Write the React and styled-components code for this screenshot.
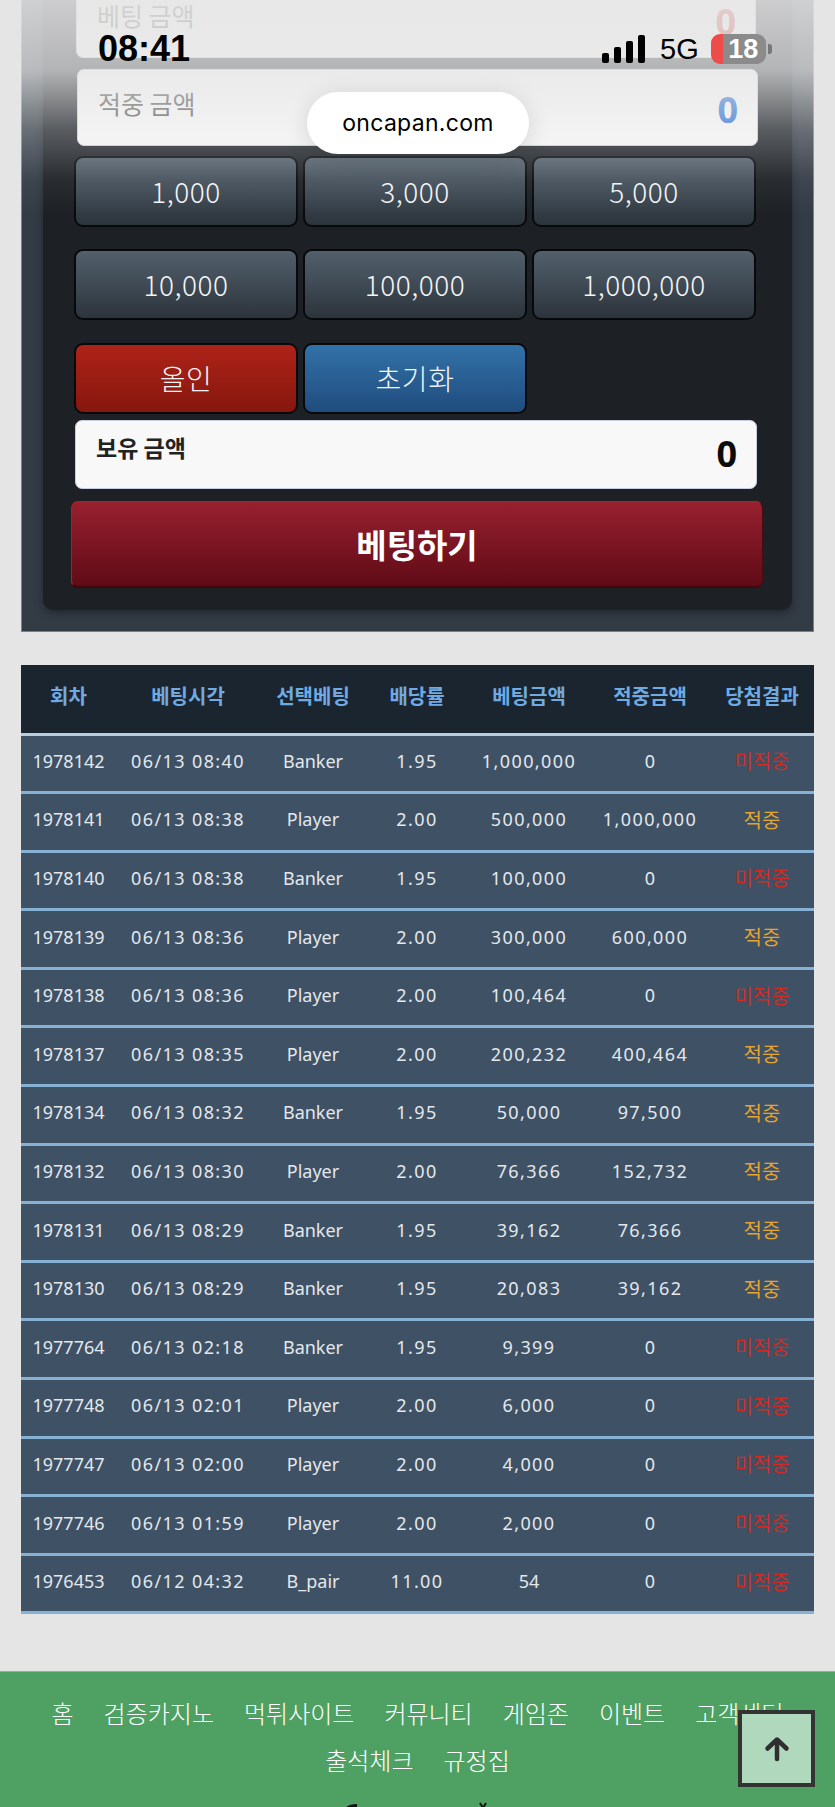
import React from 'react';
import styled, { createGlobalStyle } from 'styled-components';

const GlobalStyle = createGlobalStyle`
  html, body {
    margin: 0;
    padding: 0;
    background: #e5e5e5;
  }
  * {
    box-sizing: border-box;
  }
`;

const KR = `"Noto Sans CJK KR", sans-serif`;
const LATIN = `"Noto Sans", "Noto Sans CJK KR", sans-serif`;

const Screen = styled.div`
  position: relative;
  width: 835px;
  height: 1807px;
  overflow: hidden;
  background: #e5e5e5;
  font-family: ${LATIN};
`;

const Page = styled.div`
  margin-top: -40px;
`;

const BetPanel = styled.section`
  margin: 0 21px;
  padding: 0 21px 21px;
  background: #333b45;
  border: 1px solid #75838f;
  border-top: 0;
`;

const BetCard = styled.div`
  display: flex;
  flex-direction: column;
  padding: 21px 29px 22px 28px;
  background: #1d2126;
  border-radius: 0 0 10px 10px;
  box-shadow: 0 3px 8px rgba(0, 0, 0, 0.35);
`;

const AmountBox = styled.div`
  display: flex;
  justify-content: space-between;
  height: ${(p) => p.$height}px;
  margin: ${(p) => p.$margin};
  padding: ${(p) => p.$top}px 19px 0 20px;
  background: #f8f8f8;
  border: 1px solid #c9cde0;
  border-radius: 7px;
`;

const AmountLabel = styled.span`
  font-family: ${KR};
  font-size: ${(p) => (p.$bold ? 23 : 25)}px;
  font-weight: ${(p) => (p.$bold ? 700 : 400)};
  line-height: 34px;
  color: ${(p) => (p.$bold ? '#222' : '#555')};
`;

const AmountValue = styled.span`
  font-family: ${LATIN};
  font-size: 36px;
  font-weight: 700;
  line-height: 48px;
  color: ${(p) => p.$color};
`;

const ChipGrid = styled.div`
  display: grid;
  grid-template-columns: repeat(3, 224px);
  gap: 5px;
  margin: ${(p) => p.$margin};
  margin-left: 3px;
`;

const chipColors = {
  dark: ['#52606c', '#2c343c'],
  red: ['#ae2318', '#86170e'],
  blue: ['#3272a8', '#204c7e'],
};

const Chip = styled.button`
  height: ${(p) => p.$height || 71}px;
  padding: 0 0 2px;
  font-family: ${KR};
  font-size: 28px;
  font-weight: 300;
  letter-spacing: 0.5px;
  color: #f4f5f6;
  background: linear-gradient(${(p) => chipColors[p.$tone][0]}, ${(p) => chipColors[p.$tone][1]});
  border: 2px solid #07090b;
  border-radius: 9px;
`;

const BetButton = styled.button`
  height: 87px;
  margin-top: 12px;
  padding: 0;
  font-family: ${KR};
  font-size: 33px;
  font-weight: 700;
  color: #fff;
  background: linear-gradient(#98202f, #5f0b16);
  border: 0;
  border-top: 1px solid #ac2420;
  border-left: 1px solid #a82320;
  border-right: 1px solid #4d0a10;
  border-bottom: 2px solid #42060c;
  border-radius: 7px;
`;

const HistoryTable = styled.table`
  width: 793px;
  margin: 33px 21px 0;
  table-layout: fixed;
  border-collapse: collapse;
  text-align: center;
`;

const HeadCell = styled.th`
  height: 69px;
  padding: 0 0 7px;
  font-family: ${KR};
  font-size: 20px;
  font-weight: 700;
  color: #6fabe2;
  background: #1b2530;
  border-bottom: 3px solid #b8cddd;
`;

const Cell = styled.td`
  height: 58.6px;
  padding: 0 0 5px;
  font-family: ${LATIN};
  font-size: ${(p) => (p.$color ? 20 : 18)}px;
  font-weight: 400;
  letter-spacing: ${(p) => (p.$spaced ? 1.4 : 0)}px;
  color: ${(p) => p.$color || '#e4e8ec'};
  background: #3e5165;
  border-bottom: 3px solid #86b1d2;
`;

const Footer = styled.footer`
  margin-top: 57px;
  height: 300px;
  padding: 17px 21px 0;
  background: #4fa163;
  border-top: 1px solid #84bb92;
`;

const FooterNav = styled.nav`
  display: flex;
  flex-wrap: wrap;
  justify-content: center;
  column-gap: 30px;
  line-height: 47px;
`;

const FooterLink = styled.a`
  font-family: ${KR};
  font-size: 24px;
  font-weight: 300;
  color: #fff;
`;

const FooterMark = styled.svg`
  display: block;
  margin: 19px auto 0;
`;

const TopFade = styled.div`
  position: absolute;
  top: 0;
  left: 0;
  right: 0;
  height: 215px;
  pointer-events: none;
  background: linear-gradient(
    rgba(229, 229, 229, 0.88) 0,
    rgba(229, 229, 229, 0.75) 70px,
    rgba(229, 229, 229, 0.3) 130px,
    rgba(229, 229, 229, 0.06) 180px,
    rgba(229, 229, 229, 0) 215px
  );
`;

const StatusTime = styled.div`
  position: absolute;
  top: 28px;
  left: 98px;
  font-family: "Liberation Sans", sans-serif;
  font-size: 36px;
  font-weight: 700;
  line-height: 42px;
  color: #000;
`;

const StatusIcons = styled.div`
  position: absolute;
  top: 34px;
  left: 602px;
  display: flex;
  align-items: center;
  height: 30px;
`;

const NetworkLabel = styled.span`
  margin: 0 12px 0 15px;
  font-family: "Liberation Sans", sans-serif;
  font-size: 29px;
  color: #000;
`;

const Battery = styled.div`
  position: relative;
  display: flex;
  align-items: center;
  justify-content: center;
  width: 55px;
  height: 30px;
  padding-left: 10px;
  font-family: "Liberation Sans", sans-serif;
  font-size: 27px;
  font-weight: 700;
  color: #fff;
  border-radius: 9px;
  background: linear-gradient(90deg, #ee4b4b 12px, #8b8b8b 12px);

  &::after {
    content: '';
    position: absolute;
    top: 10px;
    right: -6px;
    width: 4px;
    height: 10px;
    border-radius: 0 3px 3px 0;
    background: #777;
  }
`;

const UrlPill = styled.div`
  position: absolute;
  top: 92px;
  left: 307px;
  display: flex;
  align-items: center;
  justify-content: center;
  width: 222px;
  height: 62px;
  font-family: "Inter", sans-serif;
  font-size: 23px;
  letter-spacing: 0.3px;
  color: #000;
  background: #fff;
  border-radius: 31px;
  box-shadow: 0 4px 24px rgba(0, 0, 0, 0.12);
`;

const ScrollTop = styled.button`
  position: absolute;
  top: 1710px;
  left: 738px;
  display: flex;
  align-items: center;
  justify-content: center;
  width: 77px;
  height: 77px;
  padding: 0;
  background: #b0d8bc;
  border: 4px solid #333;
`;

const SignalBars = () => (
  <svg width="43" height="28" viewBox="0 0 43 28">
    <rect x="0" y="18" width="7" height="10" rx="2" fill="#000" />
    <rect x="12" y="12" width="7" height="16" rx="2" fill="#000" />
    <rect x="24" y="6" width="7" height="22" rx="2" fill="#000" />
    <rect x="36" y="0" width="7" height="28" rx="2" fill="#000" />
  </svg>
);

const ArrowUp = () => (
  <svg width="26" height="26" viewBox="0 0 26 26">
    <path d="M13 23V4M3.5 12.5L13 3.5l9.5 9" fill="none" stroke="#2f2f2f" strokeWidth="4.5" strokeLinecap="round" strokeLinejoin="round" />
  </svg>
);

const columns = [95, 144, 106, 102, 122, 120, 104];
const heads = ['회차', '베팅시각', '선택베팅', '배당률', '베팅금액', '적중금액', '당첨결과'];

const rows = [
  ['1978142', '06/13 08:40', 'Banker', '1.95', '1,000,000', '0', '미적중'],
  ['1978141', '06/13 08:38', 'Player', '2.00', '500,000', '1,000,000', '적중'],
  ['1978140', '06/13 08:38', 'Banker', '1.95', '100,000', '0', '미적중'],
  ['1978139', '06/13 08:36', 'Player', '2.00', '300,000', '600,000', '적중'],
  ['1978138', '06/13 08:36', 'Player', '2.00', '100,464', '0', '미적중'],
  ['1978137', '06/13 08:35', 'Player', '2.00', '200,232', '400,464', '적중'],
  ['1978134', '06/13 08:32', 'Banker', '1.95', '50,000', '97,500', '적중'],
  ['1978132', '06/13 08:30', 'Player', '2.00', '76,366', '152,732', '적중'],
  ['1978131', '06/13 08:29', 'Banker', '1.95', '39,162', '76,366', '적중'],
  ['1978130', '06/13 08:29', 'Banker', '1.95', '20,083', '39,162', '적중'],
  ['1977764', '06/13 02:18', 'Banker', '1.95', '9,399', '0', '미적중'],
  ['1977748', '06/13 02:01', 'Player', '2.00', '6,000', '0', '미적중'],
  ['1977747', '06/13 02:00', 'Player', '2.00', '4,000', '0', '미적중'],
  ['1977746', '06/13 01:59', 'Player', '2.00', '2,000', '0', '미적중'],
  ['1976453', '06/12 04:32', 'B_pair', '11.00', '54', '0', '미적중'],
];

const links = ['홈', '검증카지노', '먹튀사이트', '커뮤니티', '게임존', '이벤트', '고객센터', '출석체크', '규정집'];

const App = () => {
  return (
    <Screen>
      <GlobalStyle />
      <Page>
        <BetPanel>
          <BetCard>
            <AmountBox $height={77} $top={16} $margin="0 7px 0 5px">
              <AmountLabel>베팅 금액</AmountLabel>
              <AmountValue $color="#d8282c">0</AmountValue>
            </AmountBox>
            <AmountBox $height={77} $top={16} $margin="11px 5px 0 6px">
              <AmountLabel>적중 금액</AmountLabel>
              <AmountValue $color="#2f72d6">0</AmountValue>
            </AmountBox>
            <ChipGrid $margin="10px 0 0">
              <Chip $tone="dark">1,000</Chip>
              <Chip $tone="dark">3,000</Chip>
              <Chip $tone="dark">5,000</Chip>
            </ChipGrid>
            <ChipGrid $margin="22px 0 0">
              <Chip $tone="dark">10,000</Chip>
              <Chip $tone="dark">100,000</Chip>
              <Chip $tone="dark">1,000,000</Chip>
            </ChipGrid>
            <ChipGrid $margin="23px 0 0">
              <Chip $tone="red">올인</Chip>
              <Chip $tone="blue">초기화</Chip>
            </ChipGrid>
            <AmountBox $height={69} $top={9} $margin="6px 6px 0 4px">
              <AmountLabel $bold>보유 금액</AmountLabel>
              <AmountValue $color="#0c0c0c">0</AmountValue>
            </AmountBox>
            <BetButton>베팅하기</BetButton>
          </BetCard>
        </BetPanel>

        <HistoryTable>
          <colgroup>
            {columns.map((w, i) => (
              <col key={i} style={{ width: w }} />
            ))}
          </colgroup>
          <thead>
            <tr>
              {heads.map((h) => (
                <HeadCell key={h}>{h}</HeadCell>
              ))}
            </tr>
          </thead>
          <tbody>
            {rows.map((row) => (
              <tr key={row[0]}>
                {row.map((v, i) => (
                  <Cell
                    key={i}
                    $spaced={/[,:/.]/.test(v)}
                    $color={i === 6 ? (v === '적중' ? '#e5a32f' : '#d42a22') : undefined}
                  >
                    {v}
                  </Cell>
                ))}
              </tr>
            ))}
          </tbody>
        </HistoryTable>

        <Footer>
          <FooterNav>
            {links.map((l) => (
              <FooterLink key={l}>{l}</FooterLink>
            ))}
          </FooterNav>
          <FooterMark width="150" height="20" viewBox="0 0 150 20">
            <path d="M1 9C2 4 7 2 14 2V9Z" fill="#111" />
            <path d="M137 1l3 5 3-5" fill="none" stroke="#111" strokeWidth="2" />
          </FooterMark>
        </Footer>
      </Page>

      <TopFade />
      <StatusTime>08:41</StatusTime>
      <StatusIcons>
        <SignalBars />
        <NetworkLabel>5G</NetworkLabel>
        <Battery>18</Battery>
      </StatusIcons>
      <UrlPill>oncapan.com</UrlPill>
      <ScrollTop>
        <ArrowUp />
      </ScrollTop>
    </Screen>
  );
};

export default App;
